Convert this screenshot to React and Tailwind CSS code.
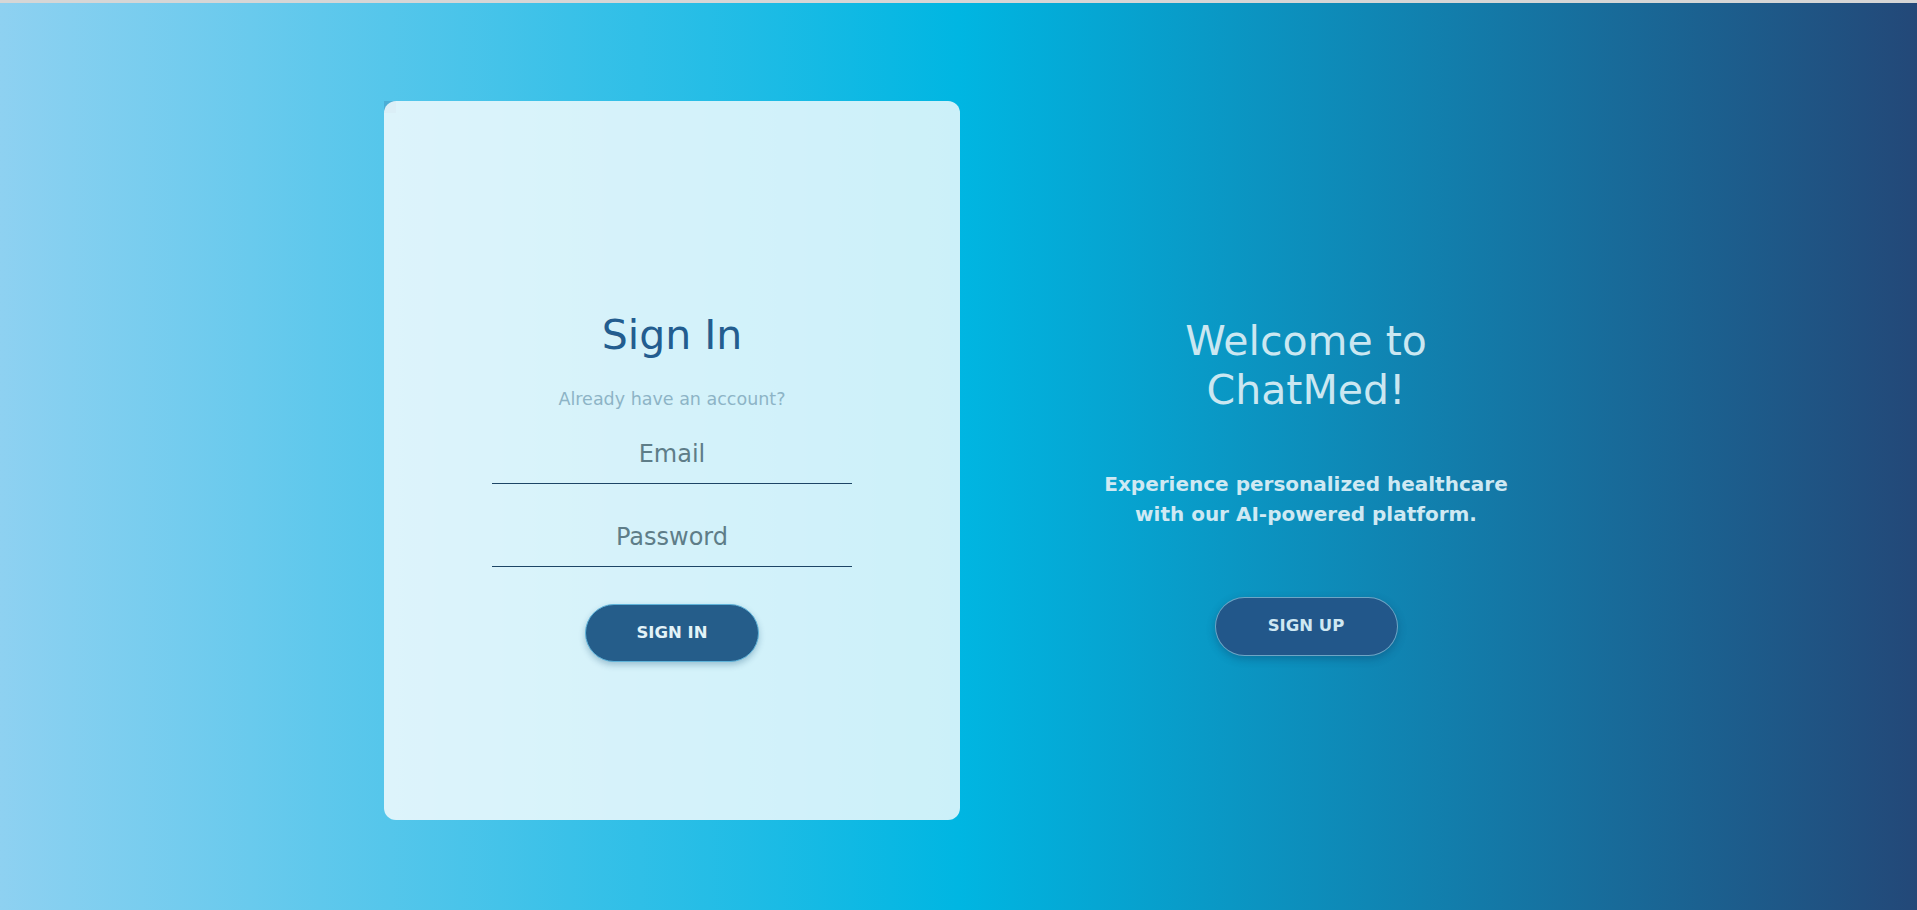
import React from 'react';

const font = { fontFamily: '"DejaVu Sans", "Liberation Sans", sans-serif' };

// Left card with the sign-in form
function SignInCard() {
  return (
    <div className="relative w-[576px] h-[719px] shrink-0">
      {/* little square peeking out behind the rounded corner */}
      <div className="absolute top-0 left-0 w-3 h-3 bg-[#4aaed6]" />
      <div className="relative h-full w-full rounded-[12px] bg-white/80 flex flex-col items-center pt-[210px]">
        <h1 className="text-[41px] leading-[48px] text-[#235d8f]">Sign In</h1>
        <p className="mt-[28px] text-[17.5px] leading-[24px] text-[#8db4c6]">Already have an account?</p>
        <input
          type="email"
          placeholder="Email"
          className="mt-[13px] h-[60px] w-[360px] bg-transparent border-b border-[#1d4566] text-center text-[24px] text-[#5e7d88] placeholder:text-[#5e7d88] outline-none"
          style={font}
        />
        <input
          type="password"
          placeholder="Password"
          className="mt-[23px] h-[60px] w-[360px] bg-transparent border-b border-[#1d4566] text-center text-[24px] text-[#5e7d88] placeholder:text-[#5e7d88] outline-none"
          style={font}
        />
        <button
          className="mt-[37px] h-[58px] w-[174px] rounded-full bg-[#255d8a] border border-[#5fb3d9] text-[16.5px] font-bold text-[#e3f3f8] shadow-[0_3px_6px_rgba(20,80,120,0.3)]"
          style={font}
        >
          SIGN IN
        </button>
      </div>
    </div>
  );
}

// Right side welcome text + sign up
function WelcomePanel() {
  return (
    <div className="w-[692px] flex flex-col items-center pt-[216px] text-center">
      <h2 className="text-[41px] leading-[49px] text-[#cbe7f1]">
        Welcome to
        <br />
        ChatMed!
      </h2>
      <p className="mt-[54px] text-[20px] leading-[30px] font-bold text-[#cfe9f3]">
        Experience personalized healthcare
        <br />
        with our AI-powered platform.
      </p>
      <button
        className="mt-[68px] h-[59px] w-[183px] rounded-full bg-[#22578a] border border-[#8fc6de]/70 text-[16.5px] font-bold text-[#cfe8f2] shadow-[0_3px_8px_rgba(10,40,80,0.3)]"
        style={font}
      >
        SIGN UP
      </button>
    </div>
  );
}

export default function App() {
  return (
    <div className="w-full h-[910px] flex flex-col overflow-hidden" style={font}>
      <div className="h-[3px] bg-[#d6d6d6]" />
      <div className="flex-1 flex pl-[384px] pt-[98px] bg-[linear-gradient(to_right,#8ed1f1,#00b6e2_50%,#234878)]">
        <SignInCard />
        <WelcomePanel />
      </div>
    </div>
  );
}
